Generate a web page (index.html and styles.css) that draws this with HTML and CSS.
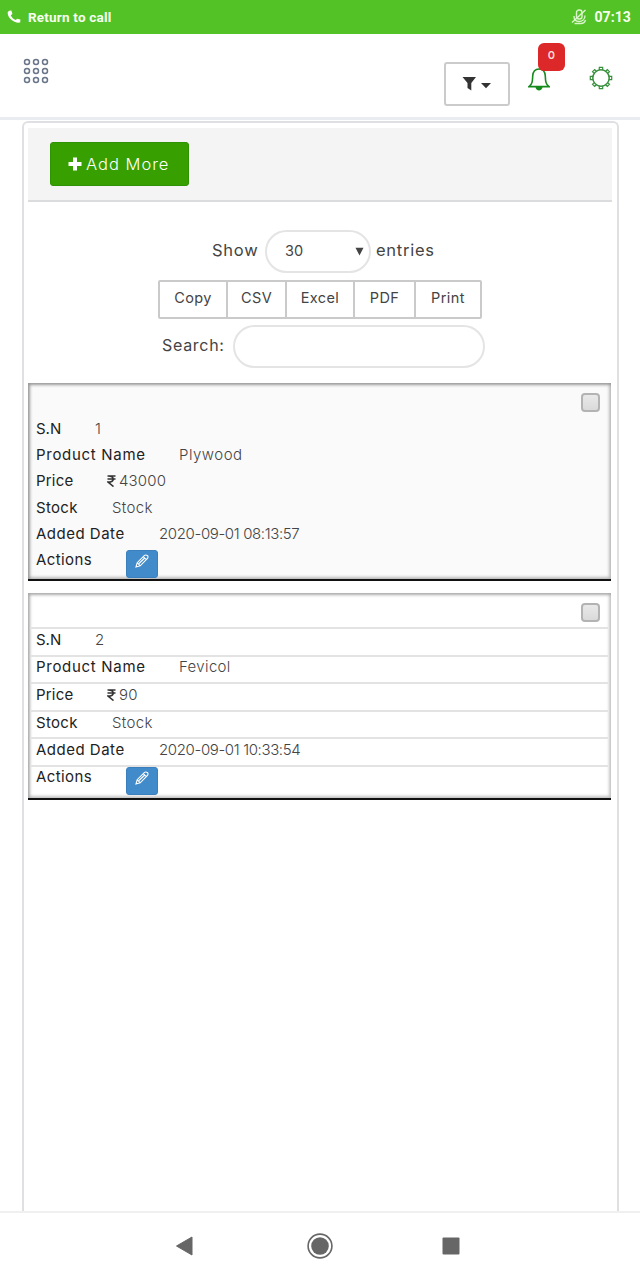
FILE: index.html
```html
<!DOCTYPE html>
<html lang="en">
<head>
<meta charset="utf-8">
<title>Products</title>
<link rel="stylesheet" href="styles.css">
</head>
<body>
<div class="status">
  <svg class="phone" width="14" height="14" viewBox="0 0 14 14"><path d="M2.2.8 4.4.6 5.4 4 3.8 5.2C4.7 7.4 6.5 9.2 8.8 10.1L10.1 8.7 13.4 9.5 13.2 12.6C6.8 13.8-.3 7.2.8 2Z" fill="#fff"/></svg>
  <span class="return">Return to call</span>
  <svg class="mute" width="16" height="16" viewBox="0 0 16 16" fill="none" stroke="#d9f5c9" stroke-width="1.4"><rect x="5.5" y="1" width="5.500" height="9" rx="2.5"/><path d="M3 7C3 11 5 12.500 8 12.500S14 10.500 14 6.500M3.500 14.500H10Q13.500 14.500 14.500 11M1 13.5 14.5 1M7 8 10 5"/></svg>
  <span class="time">07:13</span>
</div>
<header class="nav">
  <svg class="grid" width="26" height="26" viewBox="0 0 26 26" fill="none" stroke="#68758a" stroke-width="1.5"><circle cx="4" cy="4" r="2.5"/><circle cx="13" cy="4" r="2.5"/><circle cx="22" cy="4" r="2.5"/><circle cx="4" cy="13" r="2.5"/><circle cx="13" cy="13" r="2.5"/><circle cx="22" cy="13" r="2.5"/><circle cx="4" cy="22" r="2.5"/><circle cx="13" cy="22" r="2.5"/><circle cx="22" cy="22" r="2.5"/></svg>
  <div class="filter">
    <svg width="30" height="14" viewBox="0 0 30 14" fill="#333"><path d="M.5 0H14L9.3 6V13.5L5.5 11V6ZM19 6H29L24 11.3Z"/></svg>
  </div>
  <div class="bell">
    <svg width="22" height="24" viewBox="0 0 22 24" fill="none" stroke="#168a1c" stroke-width="1.6"><path d="M1 18.600H21C17.5 16 17.5 13 17.3 8 17 3.500 14.5 1 11 1S5 3.500 4.700 8C4.500 13 4.500 16 1 18.600Z"/><path d="M7.500 19H14.500C14.300 23.500 7.700 23.500 7.500 19Z" fill="#168a1c" stroke="none"/></svg>
    <span class="badge">0</span>
  </div>
  <svg class="gear" width="24" height="24" viewBox="0 0 24 24" fill="none" stroke="#38903c" stroke-width="1.2"><circle cx="12" cy="12" r="8.200" stroke-width="1.500"/><path d="M10.300 4V1.300H13.700V4M10.300 20V22.700H13.700V20M4 10.300H1.300V13.700H4M20 10.300H22.700V13.700H20"/><g transform="rotate(45 12 12)"><path d="M10.500 4V1.500H13.500V4M10.500 20V22.500H13.500V20M4 10.500H1.500V13.500H4M20 10.500H22.500V13.500H20"/></g></svg>
</header>
<main class="panel">
  <div class="toolbar"><button class="add"><svg width="14" height="14" viewBox="0 0 14 14"><path d="M7 .5V13.500M.5 7H13.500" stroke="#fff" stroke-width="4"/></svg><span>Add More</span></button></div>
  <div class="length"><span class="show">Show</span><div class="select"><span>30</span><svg width="9" height="9" viewBox="0 0 9 9"><path d="M.5 .8H8.500L4.500 8.500Z" fill="#444"/></svg></div><span class="entries">entries</span></div>
  <div class="exports"><span class="copy">Copy</span><span class="csv">CSV</span><span class="excel">Excel</span><span class="pdf">PDF</span><span class="print">Print</span></div>
  <div class="search"><span>Search:</span><div class="field"></div></div>
  <section class="record first">
    <div class="row check"><i class="box"></i></div>
    <div class="row"><b class="sn">S.N</b><span class="one">1</span></div>
    <div class="row"><b class="name">Product Name</b><span class="ply">Plywood</span></div>
    <div class="row"><b class="price">Price</b><svg class="rupee" width="9" height="12" viewBox="0 0 9 12"><path d="M.5 1H8.500M.5 4H8.500M1 1C8 .8 8 7 1 7L6.500 11.500" fill="none" stroke="#333" stroke-width="1.600"/></svg><span class="amount">43000</span></div>
    <div class="row"><b class="stock">Stock</b><span class="stk">Stock</span></div>
    <div class="row"><b class="date">Added Date</b><span class="when">2020-09-01 08:13:57</span></div>
    <div class="row"><b class="actions">Actions</b><a class="edit"><svg width="14" height="14" viewBox="0 0 14 14" fill="none" stroke="#fff" stroke-width="1.100"><path d="M1 13 2.200 8.700 9.500 1.400Q11 .4 12.500 1.700 13.500 3 12.500 4.500L5.200 11.800ZM2.200 8.700 5.200 11.800M8.300 2.700 11.300 5.700M4 9.500 9.800 4"/></svg></a></div>
  </section>
  <section class="record second">
    <div class="row check"><i class="box"></i></div>
    <div class="row"><b class="sn">S.N</b><span>2</span></div>
    <div class="row"><b class="name">Product Name</b><span class="fev">Fevicol</span></div>
    <div class="row"><b class="price">Price</b><svg class="rupee" width="9" height="12" viewBox="0 0 9 12"><path d="M.5 1H8.500M.5 4H8.500M1 1C8 .8 8 7 1 7L6.500 11.500" fill="none" stroke="#333" stroke-width="1.600"/></svg><span class="amount">90</span></div>
    <div class="row"><b class="stock">Stock</b><span class="stk">Stock</span></div>
    <div class="row"><b class="date">Added Date</b><span class="when">2020-09-01 10:33:54</span></div>
    <div class="row last"><b class="actions">Actions</b><a class="edit"><svg width="14" height="14" viewBox="0 0 14 14" fill="none" stroke="#fff" stroke-width="1.100"><path d="M1 13 2.200 8.700 9.500 1.400Q11 .4 12.500 1.700 13.500 3 12.500 4.500L5.200 11.800ZM2.200 8.700 5.200 11.800M8.300 2.700 11.300 5.700M4 9.500 9.800 4"/></svg></a></div>
  </section>
</main>
<footer class="keys">
  <svg width="18" height="20" viewBox="0 0 18 20"><path d="M1.500 10 17 1V19Z" fill="#666" stroke="#666" stroke-linejoin="round"/></svg>
  <svg width="26" height="26" viewBox="0 0 26 26"><circle cx="13" cy="13" r="11.900" fill="none" stroke="#666" stroke-width="1.600"/><circle cx="13" cy="13" r="8.800" fill="#666"/></svg>
  <svg width="18" height="18" viewBox="0 0 18 18"><rect x=".5" y=".5" width="17" height="17" rx="1" fill="#666"/></svg>
</footer>
</body>
</html>
```
FILE: styles.css
```css
* { box-sizing: border-box; }
body { margin: 0; height: 1280px; overflow: hidden; display: flex; flex-direction: column; background: #fff; color: #444; font: 400 15px/20px Inter, "Liberation Sans", sans-serif; }
svg { display: block; flex: none; }
span, b { white-space: nowrap; }
.status { flex: none; height: 34px; padding: 0 9px 0 7px; display: flex; align-items: center; background: #53c226; color: #f6fff0; font: 700 14px/20px Roboto, sans-serif; }
.return { margin-left: 7px; font-size: 13.5px; letter-spacing: .2px; }
.mute { margin-left: auto; margin-right: 7px; }
.time { letter-spacing: .1px; }
.nav { flex: none; height: 86px; padding-left: 23px; display: flex; align-items: flex-start; border-bottom: 3px solid #e9ecf1; }
.grid { margin-top: 24px; }
.filter { width: 66px; height: 44px; margin: 28px 0 0 395px; border: 2px solid #cbcbcb; border-radius: 3px; display: flex; align-items: center; justify-content: center; }
.bell { position: relative; margin: 34px 0 0 18px; }
.badge { position: absolute; left: 10px; top: -25px; width: 27px; height: 28px; border-radius: 6px; background: #dc2828; color: #fbdada; font: 600 11px/25px Inter, sans-serif; text-align: center; }
.gear { margin: 32px 0 0 39px; }
.panel { flex: 1; width: 597px; margin: 1px 0 0 22px; padding: 5px 5px 0 4px; border: 2px solid #dee0e4; border-bottom: 0; border-radius: 6px 6px 0 0; }
.toolbar { height: 74px; padding: 14px 22px; background: #f4f4f4; border-bottom: 2px solid #dbdcdd; }
.add { width: 139px; height: 44px; padding: 0 0 0 17px; display: flex; align-items: center; gap: 4px; border: 1px solid #2d9300; border-radius: 3px; background: #379f00; color: #fff; font: 300 16.5px/20px Inter, sans-serif; letter-spacing: 1px; }
.length { height: 43px; margin: 28px 0 0 184px; display: flex; align-items: center; font-size: 16.5px; letter-spacing: .75px; }
.length > span { margin-top: -3px; }
.show { width: 53px; }
.select { width: 106px; height: 43px; padding: 0 5px 0 18px; display: flex; align-items: center; justify-content: space-between; border: 2px solid #e4e4e4; border-radius: 22px; font-size: 14.5px; letter-spacing: 0; }
.select span { margin-top: -2px; }
.entries { margin-left: 5px; }
.exports { width: 324px; height: 39px; margin: 7px 0 0 130px; display: flex; border: 2px solid #cacaca; border-radius: 2px; font-size: 14.5px; line-height: 32px; letter-spacing: .4px; text-align: center; }
.exports span + span { border-left: 2px solid #cacaca; }
.copy { width: 66px; }
.csv { width: 59px; }
.excel { width: 68px; }
.pdf { width: 61px; }
.print { flex: 1; }
.search { height: 43px; margin: 6px 0 0 134px; display: flex; font-size: 16px; line-height: 40px; letter-spacing: .7px; }
.search span { width: 71px; }
.field { width: 252px; border: 2px solid #e4e4e4; border-radius: 22px; }
.record { width: 583px; border-bottom: 2px solid #111; box-shadow: inset 2px 2px 3px #999, inset -2px -2px 3px #bbb; }
.first { height: 198px; margin-top: 15px; background: #fafafa; }
.second { height: 207px; margin-top: 12px; box-shadow: inset 2px 2px 3px #aaa, inset -2px -2px 3px #c4c4c4; }
.row { height: 26.2px; padding-left: 8px; display: flex; align-items: center; font-weight: 300; }
.row b { color: #222; font-weight: 400; }
.first .check { height: 33px; padding-top: 10px; }
.check { justify-content: flex-end; align-items: flex-start; }
.first .check { padding-right: 11px; }
.box { width: 19px; height: 19px; border: 2px solid #b3b3b3; border-radius: 4px; background: linear-gradient(#e9e9e9, #dadada); }
.second .row { height: 27.6px; margin: 0 3px 0 2px; padding: 0 0 4px 6px; border-top: 2px solid #e3e3e3; }
.second .check { height: 34px; padding: 8px 8px 0 0; border-top-color: transparent; }
.second .last { padding-bottom: 5px; }
.row .sn { width: 59px; }
.row .name { width: 143px; letter-spacing: .7px; }
.row .price { width: 71px; letter-spacing: .2px; }
.row .stock { width: 76px; letter-spacing: .3px; }
.row .date { width: 123px; letter-spacing: .5px; }
.row .actions { width: 90px; letter-spacing: .4px; }
.ply { letter-spacing: .5px; }
.fev, .stk { letter-spacing: .35px; }
.amount { margin-left: 3px; letter-spacing: .15px; }
.when { letter-spacing: -.37px; }
.edit { width: 32px; height: 28px; margin-top: 7px; display: flex; align-items: center; justify-content: center; padding-bottom: 5px; background: #428bca; border: 1px solid #3b80bd; border-radius: 3px; }
.keys { flex: none; height: 69px; padding: 0 180px 2px 175px; display: grid; grid-template-columns: 132px 135px 18px; align-items: center; border-top: 2px solid #f0f0f0; }
```
